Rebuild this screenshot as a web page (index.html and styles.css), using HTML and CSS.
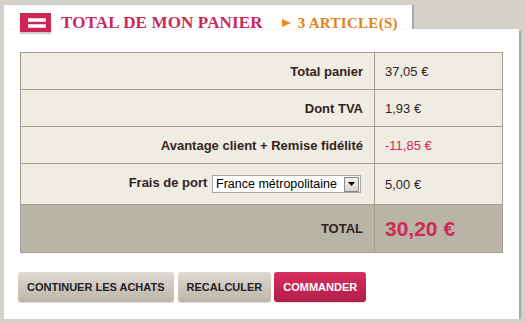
FILE: index.html
```html
<!DOCTYPE html>
<html lang="fr">
<head>
    <meta charset="UTF-8">
    <title>Mon panier</title>
    <link rel="stylesheet" href="styles.css">
</head>
<body>
    <div class="panier">
        <!-- Onglet titre -->
        <div class="tab">
            <span class="tab-icon">
                <svg width="31" height="19" viewBox="0 0 31 19">
                    <rect x="0" y="0" width="31" height="19" fill="#cc2655"/>
                    <rect x="8.5" y="5.5" width="17" height="3" fill="#fff" stroke="#f3c9d5"/>
                    <rect x="8.5" y="11.5" width="17" height="3" fill="#fff" stroke="#f3c9d5"/>
                </svg>
            </span>
            <h1>Total de mon panier</h1>
            <span class="count"><span class="arrow"></span>3 article(s)</span>
        </div>

        <div class="box">
            <table class="recap">
                <tr>
                    <th>Total panier</th>
                    <td>37,05 €</td>
                </tr>
                <tr>
                    <th>Dont TVA</th>
                    <td>1,93 €</td>
                </tr>
                <tr>
                    <th>Avantage client + Remise fidélité</th>
                    <td class="remise">-11,85 €</td>
                </tr>
                <tr class="port">
                    <th>
                        Frais de port
                        <span class="select">
                            <span class="select-text">France métropolitaine</span>
                            <span class="select-btn">
                                <svg width="7" height="4" viewBox="0 0 7 4"><path d="M0 0h7L3.5 4z" fill="#000"/></svg>
                            </span>
                        </span>
                    </th>
                    <td>5,00 €</td>
                </tr>
                <tr class="total">
                    <th>TOTAL</th>
                    <td>30,20 €</td>
                </tr>
            </table>

            <div class="actions">
                <button class="btn">Continuer les achats</button>
                <button class="btn">Recalculer</button>
                <button class="btn btn-red">Commander</button>
            </div>
        </div>
    </div>
</body>
</html>
```

FILE: styles.css
```css
body {
    margin: 0;
    background: #d4d1c9;
    font-family: "Liberation Sans", Arial, sans-serif;
}
.panier {
    width: 515px;
    margin: 5px 0 0 4px;
}
.tab {
    position: relative;
    z-index: 1;
    width: 408px;
    height: 24px;
    background: #fff;
    box-shadow: 2px 0 1px rgba(0,0,0,0.18);
    display: flex;
    align-items: flex-start;
    padding-top: 8px;
    box-sizing: border-box;
}
.tab-icon {
    display: block;
    margin-left: 16px;
    width: 31px;
    height: 19px;
    box-shadow: 0 2px 1px rgba(0,0,0,0.2);
}
.tab-icon svg {
    display: block;
}
h1 {
    margin: 1px 0 0 10px;
    font-family: "Liberation Serif", "Times New Roman", serif;
    font-size: 17px;
    line-height: 17px;
    font-weight: bold;
    letter-spacing: 0.15px;
    text-transform: uppercase;
    color: #c92a58;
}
.count {
    margin-left: 19px;
    margin-top: 3px;
    font-family: "Liberation Serif", "Times New Roman", serif;
    font-size: 15px;
    line-height: 15px;
    font-weight: bold;
    letter-spacing: 0.3px;
    text-transform: uppercase;
    color: #e5801d;
    display: flex;
    align-items: center;
}
.arrow {
    width: 0;
    height: 0;
    border-left: 9px solid #f08a1a;
    border-top: 4.5px solid transparent;
    border-bottom: 4.5px solid transparent;
    margin-right: 7px;
    margin-top: -2px;
}
.box {
    background: #fff;
    padding: 23px 16px 17px 16px;
    box-shadow: 2px 2px 1px rgba(0,0,0,0.2);
}
.recap {
    width: 483px;
    border-collapse: collapse;
    background: #efece4;
    color: #33241a;
    font-size: 13px;
}
.recap th,
.recap td {
    border: 1px solid #a59e8e;
    height: 36px;
    padding: 0;
}
.recap th {
    text-align: right;
    padding-right: 11px;
    font-weight: bold;
    width: 342px;
}
.recap td {
    padding-left: 10px;
}
.recap .remise {
    color: #d0285a;
}
.recap .port th,
.recap .port td {
    height: 40px;
}
.select {
    display: inline-flex;
    align-items: center;
    vertical-align: middle;
    width: 149px;
    height: 18px;
    box-sizing: border-box;
    border: 1px solid #a7a7a7;
    background: #fff;
    margin-left: 1px;
    margin-right: 2px;
    font-size: 12.5px;
    font-weight: normal;
    text-align: left;
    color: #000;
}
.select-text {
    flex: 1;
    padding-left: 3px;
    white-space: nowrap;
}
.select-btn {
    width: 15px;
    height: 15px;
    margin-right: 1px;
    box-sizing: border-box;
    border: 1px solid #888;
    background: linear-gradient(#f2f1ec, #d8d5cc);
    display: flex;
    align-items: center;
    justify-content: center;
}
.select-btn svg {
    display: block;
}
.recap .total th,
.recap .total td {
    height: 47px;
    background: #b8b4a8;
}
.recap .total th {
    font-size: 13px;
    color: #33241e;
}
.recap .total td {
    font-size: 21px;
    font-weight: bold;
    color: #cf2a57;
}
.actions {
    display: flex;
    gap: 4px;
    margin-top: 19px;
    margin-left: -2px;
}
.btn {
    height: 30px;
    padding: 0 9px;
    border: none;
    border-radius: 3px;
    background: linear-gradient(#dedad2, #bbb6aa);
    box-shadow: 0 1px 1px rgba(0,0,0,0.15);
    font-family: "Liberation Sans", Arial, sans-serif;
    font-size: 11px;
    font-weight: bold;
    text-transform: uppercase;
    color: #222;
    cursor: pointer;
}
.btn-red {
    margin-left: -1px;
    background: linear-gradient(#d83060, #b21e48);
    color: #fff;
}
```
